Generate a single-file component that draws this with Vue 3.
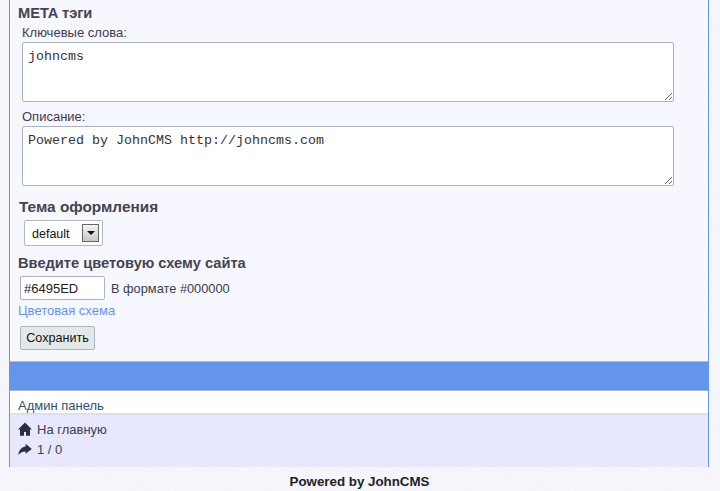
<script setup>
const fields = [
  { label: 'Ключевые слова:', value: 'johncms' },
  { label: 'Описание:', value: 'Powered by JohnCMS http://johncms.com' }
]
</script>

<template>
  <div class="page">
    <div class="wrap">
      <form class="form" @submit.prevent>
        <h3 class="meta-title">META тэги</h3>
        <div v-for="f in fields" :key="f.label" class="field">
          <div class="label">{{ f.label }}</div>
          <textarea class="area" :value="f.value"></textarea>
        </div>
        <h3 class="theme-title">Тема оформления</h3>
        <div class="select-box">
          <span class="select-text">default</span>
          <span class="arrow"><i></i></span>
        </div>
        <h3 class="color-title">Введите цветовую схему сайта</h3>
        <div class="color-row">
          <input class="color-input" value="#6495ED" />
          <span class="hint">В формате #000000</span>
        </div>
        <a class="link" href="#">Цветовая схема</a>
        <button class="save" type="button">Сохранить</button>
      </form>
      <div class="bar"></div>
      <div class="admin"><a href="#">Админ панель</a></div>
      <div class="footer">
        <div class="foot-row">
          <svg width="14" height="14" viewBox="0 0 14 14"><path d="M7 0.4 L0 7.4 L2 7.4 L2 13.8 L6 13.8 L6 10 L8 10 L8 13.8 L12 13.8 L12 7.4 L14 7.4 Z" fill="#2c2c44"/></svg>
          <span>На главную</span>
        </div>
        <div class="foot-row">
          <svg width="14" height="14" viewBox="0 0 14 14"><path d="M7.6 1.8 L13.8 7 L7.6 11.8 L7.6 9.6 C5 9.4 2.6 10.6 0.4 13 C0.6 8.2 3.4 5 7.6 4.4 Z" fill="#2c2c44"/></svg>
          <span>1 / 0</span>
        </div>
      </div>
    </div>
    <div class="powered">Powered by JohnCMS</div>
  </div>
</template>

<style>
html, body { margin: 0; background: #f5f5fc; }
</style>

<style scoped>
.page {
  width: 720px;
  height: 491px;
  overflow: hidden;
  background-color: #f6f6fc;
  background-image: url("data:image/svg+xml,%3Csvg xmlns='http://www.w3.org/2000/svg' width='200' height='200'%3E%3Cfilter id='n'%3E%3CfeTurbulence type='fractalNoise' baseFrequency='0.9' numOctaves='2' stitchTiles='stitch'/%3E%3CfeColorMatrix values='0 0 0 0 0.45 0 0 0 0 0.45 0 0 0 0 0.6 0 0 0 0.5 -0.2'/%3E%3C/filter%3E%3Crect width='200' height='200' filter='url(%23n)' opacity='0.25'/%3E%3C/svg%3E");
  font-family: "Liberation Sans", Arial, sans-serif;
  font-size: 13px;
  color: #3d3d4d;
}
.wrap {
  margin: 0 11px 0 9px;
  border-left: 1px solid #6495ed;
  border-right: 1px solid #6495ed;
}
.form {
  background: #f7f7ff;
  height: 361px;
  padding: 0 8px;
  display: flex;
  flex-direction: column;
  align-items: flex-start;
}
h3 { margin: 0; font-size: 14.67px; font-weight: bold; color: #444450; line-height: 18px; }
.meta-title { margin-top: 4px; }
.field { margin-left: 4px; }
.label { line-height: 16px; margin-top: 3px; margin-bottom: 1px; }
.field + .field .label { margin-top: 7px; }
.area {
  display: block;
  box-sizing: border-box;
  width: 652px;
  height: 60px;
  margin: 0;
  padding: 6px 5px;
  border: 1px solid #a9b3c1;
  border-radius: 2px;
  background: #fff;
  font-family: "Liberation Mono", monospace;
  font-size: 13.33px;
  color: #333;
  outline: none;
}
.theme-title { margin-top: 12px; margin-left: 1px; font-size: 15.35px; }
.select-box {
  box-sizing: border-box;
  width: 79px;
  height: 26px;
  margin: 4px 0 0 6px;
  padding: 0 3px 0 7px;
  border: 1px solid #b0b8c4;
  border-radius: 2px;
  background: #fff;
  color: #111;
  font-size: 12.5px;
  display: flex;
  align-items: center;
  justify-content: space-between;
}
.select-text { padding-top: 2px; }
.arrow {
  box-sizing: border-box;
  width: 17px;
  height: 18px;
  border: 1px solid #666;
  background: linear-gradient(#f4f4f4, #c8c8c8);
  display: flex;
  align-items: center;
  justify-content: center;
}
.arrow i {
  display: block;
  width: 0;
  height: 0;
  border-left: 4px solid transparent;
  border-right: 4px solid transparent;
  border-top: 4px solid #111;
}
.color-title { margin-top: 8px; }
.color-row { display: flex; align-items: center; margin: 4px 0 0 2px; }
.color-input {
  box-sizing: border-box;
  width: 85px;
  height: 24px;
  padding: 0 3px;
  border: 1px solid #a9b3c1;
  border-radius: 2px;
  background: #fff;
  font: 13px "Liberation Sans", Arial, sans-serif;
  color: #222;
  outline: none;
}
.hint { margin-left: 6px; font-size: 12.8px; }
.link { color: #6495ed; text-decoration: none; line-height: 16px; margin-top: 3px; }
.save {
  box-sizing: border-box;
  width: 75px;
  height: 24px;
  margin: 7px 0 0 2px;
  padding: 0;
  border: 1px solid #aeb6bd;
  border-radius: 2px;
  background: #e3e8e8;
  font: 12.6px "Liberation Sans", Arial, sans-serif;
  color: #111;
}
.bar {
  height: 28px;
  background: #6495ed;
  border-top: 1px solid #b4bcc8;
  border-bottom: 1px solid #a9b3c1;
}
.admin {
  background: #fff;
  height: 22px;
  padding: 0 8px;
  line-height: 30px;
  overflow: hidden;
  border-bottom: 2px solid #dcdcf6;
}
.admin a { color: #2f4f73; text-decoration: none; }
.footer {
  background: #e7e7ff;
  height: 52px;
  padding: 4px 8px 0;
  box-sizing: border-box;
}
.foot-row { display: flex; align-items: center; gap: 5px; height: 20px; }
.powered {
  text-align: center;
  font-weight: bold;
  font-size: 13.33px;
  margin-left: -1px;
  color: #222;
  line-height: 16px;
  margin-top: 7px;
}
</style>
